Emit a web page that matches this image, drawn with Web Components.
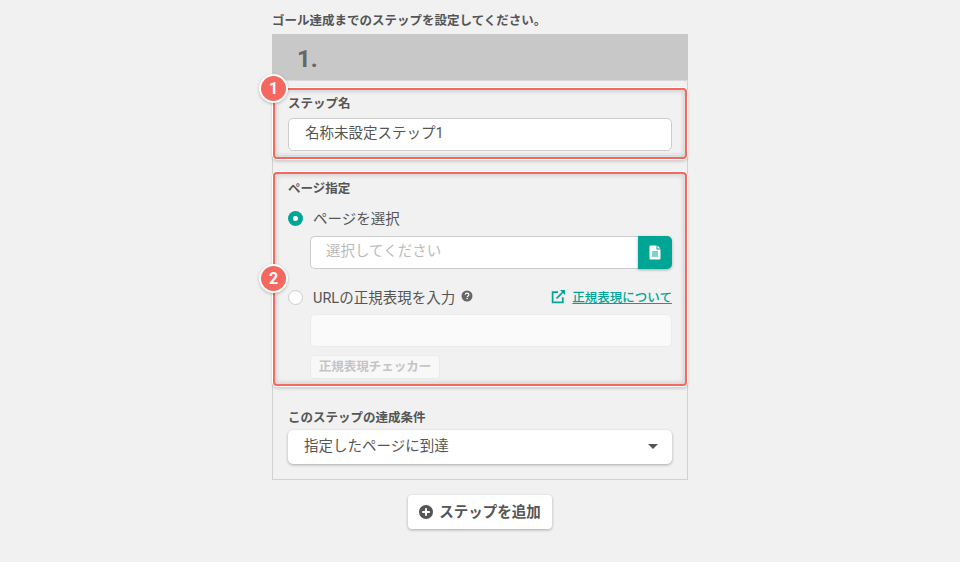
<!DOCTYPE html>
<html lang="ja">
<head>
<meta charset="utf-8">
<title>ステップ設定</title>
<style>
  html, body { margin: 0; height: 100%; }
  body {
    background: #f1f1f1;
    color: #555;
    font-family: Roboto, "Noto Sans CJK JP", sans-serif;
    overflow: hidden;
  }
</style>
</head>
<body>
<goal-page>
  <step-card number="1.">
    <marked-section badge="1" style="--gap-top:6px;--pad:9px 16px 0;--h:73px">
      <field-label style="--after:7px">ステップ名</field-label>
      <text-box value="名称未設定ステップ1"></text-box>
    </marked-section>
    <marked-section badge="2" style="--gap-top:11px;--pad:10px 16px 0;--h:216px;--badge-top:93px">
      <field-label style="--after:11px">ページ指定</field-label>
      <radio-row checked style="--row-after:9px">ページを選択</radio-row>
      <page-picker></page-picker>
      <radio-row help link="正規表現について" style="--row-top:17px">URLの正規表現を入力</radio-row>
      <text-box disabled indent></text-box>
      <checker-button>正規表現チェッカー</checker-button>
    </marked-section>
    <select-field label="このステップの達成条件" value="指定したページに到達"></select-field>
  </step-card>
  <add-button>ステップを追加</add-button>
</goal-page>

<script>
class GoalPage extends HTMLElement {
  constructor() {
    super();
    this.attachShadow({ mode: "open" });
    this.shadowRoot.innerHTML = `
      <style>
        :host { display: block; width: 416px; margin: 0 auto; padding-top: 13px; }
        p { margin: 0 0 6px; height: 15px; font-size: 12.5px; line-height: 15px; font-weight: 700; color: #555; }
      </style>
      <p>ゴール達成までのステップを設定してください。</p>
      <slot></slot>
    `;
  }
}

class StepCard extends HTMLElement {
  constructor() {
    super();
    this.attachShadow({ mode: "open" });
    this.shadowRoot.innerHTML = `
      <style>
        :host { display: block; box-sizing: border-box; height: 446px; border: 1px solid #d2d2d2; border-top: 0; }
        header {
          height: 47px; margin: 0 -1px; padding-left: 25px; box-sizing: border-box;
          background: #c8c8c8; border-bottom: 1px solid #d9d9d9;
          font-size: 24px; line-height: 50px; font-weight: 700; color: #666;
        }
      </style>
      <header></header>
      <slot></slot>
    `;
    this.shadowRoot.querySelector("header").textContent = this.getAttribute("number");
  }
}

class MarkedSection extends HTMLElement {
  constructor() {
    super();
    this.attachShadow({ mode: "open" });
    this.shadowRoot.innerHTML = `
      <style>
        :host {
          display: block; position: relative; box-sizing: border-box;
          margin: var(--gap-top) -1px 0; height: var(--h); padding: var(--pad);
        }
        .frame {
          position: absolute; inset: 1px; border-radius: 4px; pointer-events: none;
          border: 2px solid #f4685f;
          box-shadow: 0 0 0 1px #fff, 0 2px 3px 1px rgba(0,0,0,.14), inset 0 0 4px 2px rgba(0,0,0,.12);
        }
        .badge {
          position: absolute; left: -13px; top: var(--badge-top, -13px);
          width: 25px; height: 25px; border-radius: 50%;
          background: #f4685f; border: 2px solid #fff; box-shadow: 0 1px 3px rgba(0,0,0,.25);
          color: #fff; font-size: 16px; font-weight: 700; line-height: 25px; text-align: center;
        }
      </style>
      <slot></slot>
      <div class="frame"></div>
      <div class="badge"></div>
    `;
    this.shadowRoot.querySelector(".badge").textContent = this.getAttribute("badge");
  }
}

class FieldLabel extends HTMLElement {
  constructor() {
    super();
    this.attachShadow({ mode: "open" });
    this.shadowRoot.innerHTML = `
      <style>
        :host { display: block; height: 15px; margin-bottom: var(--after, 6px); font-size: 12.5px; line-height: 15px; font-weight: 700; color: #555; }
      </style>
      <slot></slot>
    `;
  }
}

class TextBox extends HTMLElement {
  constructor() {
    super();
    this.attachShadow({ mode: "open" });
    this.shadowRoot.innerHTML = `
      <style>
        :host {
          display: block; box-sizing: border-box; height: 33px; padding-left: 16px;
          background: #fff; border: 1px solid #ccc; border-radius: 5px;
          font-size: 14.5px; line-height: 29px; color: #555;
        }
        :host([disabled]) { background: #fafafa; border-color: #ececec; }
        :host([indent]) { margin-left: 22px; }
      </style>
      <span></span>
    `;
    this.shadowRoot.querySelector("span").textContent = this.getAttribute("value") || "";
  }
}

class RadioRow extends HTMLElement {
  constructor() {
    super();
    this.attachShadow({ mode: "open" });
    const help = this.hasAttribute("help") ? `
      <svg class="help" width="12" height="12" viewBox="0 0 12 12">
        <circle cx="6" cy="6" r="5.5" fill="#666"/>
        <path d="M4.2 4.7C4.3 3.7 5 3.1 6 3.1c1.1 0 1.9.6 1.9 1.5 0 1.3-1.6 1.3-1.6 2.4" fill="none" stroke="#fff" stroke-width="1.2"/>
        <rect x="5.5" y="7.8" width="1.4" height="1.3" fill="#fff"/>
      </svg>` : "";
    const link = this.getAttribute("link");
    const linkPart = link ? `
      <a>
        <svg width="15" height="15" viewBox="0 0 15 15" fill="none" stroke="#00a595" stroke-width="1.7">
          <path d="M7 3.2H1.6v10.2h10.2V8.2"/>
          <path d="M5.6 9.4L13 2"/>
          <path d="M9 1h5v5Z" stroke="none" fill="#00a595"/>
        </svg>
        <span>${link}</span>
      </a>` : "";
    this.shadowRoot.innerHTML = `
      <style>
        :host {
          display: flex; align-items: center; height: 20px; margin-top: var(--row-top, 0);
          margin-bottom: var(--row-after, 8px); font-size: 14.5px; color: #555;
        }
        .dot {
          box-sizing: border-box; width: 15px; height: 15px; border-radius: 50%;
          margin: 2px 10px 0 0; background: #fff; border: 1px solid #ccc;
        }
        :host([checked]) .dot {
          border: 0;
          background: radial-gradient(circle at center, #fff 2px, #00a595 3px);
        }
        .help { margin-left: 6px; }
        a {
          margin-left: auto; display: flex; align-items: center; gap: 6px;
          font-size: 12.5px; font-weight: 500; color: #00a595;
        }
        a span { text-decoration: underline; }
      </style>
      <span class="dot"></span><slot></slot>${help}${linkPart}
    `;
  }
}

class PagePicker extends HTMLElement {
  constructor() {
    super();
    this.attachShadow({ mode: "open" });
    this.shadowRoot.innerHTML = `
      <style>
        :host { display: flex; height: 33px; margin-left: 22px; }
        .box {
          flex: 1; box-sizing: border-box; padding-left: 15px;
          background: #fff; border: 1px solid #ccc; border-right: 0; border-radius: 5px 0 0 5px;
          font-size: 14.5px; line-height: 29px; color: #bbb;
        }
        button {
          width: 34px; padding: 0; border: 0; border-radius: 0 5px 5px 0; background: #00a595;
          box-shadow: 0 1px 3px rgba(0,0,0,.3); display: flex; align-items: center; justify-content: center;
        }
      </style>
      <div class="box">選択してください</div>
      <button>
        <svg width="12" height="15" viewBox="0 0 12 15">
          <path d="M0.5 1.5a1 1 0 0 1 1-1H7.5V4.5H11.5V13.5a1 1 0 0 1-1 1H1.5a1 1 0 0 1-1-1Z" fill="#fff"/>
          <path d="M8.5 .6L11.4 3.5H8.5Z" fill="#fff"/>
          <path d="M3 7h6M3 9h6M3 11h6" stroke="#00a595" stroke-width="1"/>
        </svg>
      </button>
    `;
  }
}

class CheckerButton extends HTMLElement {
  constructor() {
    super();
    this.attachShadow({ mode: "open" });
    this.shadowRoot.innerHTML = `
      <style>
        :host {
          display: block; box-sizing: border-box; width: 130px; height: 24px; margin: 8px 0 0 22px;
          background: #f8f8f8; border: 1px solid #ebebeb; border-radius: 4px;
          font-size: 12.5px; font-weight: 700; line-height: 22px; text-align: center; color: #c4c4c4;
        }
      </style>
      <slot></slot>
    `;
  }
}

class SelectField extends HTMLElement {
  constructor() {
    super();
    this.attachShadow({ mode: "open" });
    this.shadowRoot.innerHTML = `
      <style>
        :host { display: block; margin: 23px 15px 0 15px; }
        label { display: block; height: 15px; margin-bottom: 5px; font-size: 12.5px; line-height: 15px; font-weight: 700; color: #555; }
        .select {
          display: flex; align-items: center; justify-content: space-between; box-sizing: border-box;
          height: 34px; padding: 0 14px 0 16px; background: #fff; border-radius: 5px;
          box-shadow: 0 1px 3px rgba(0,0,0,.3); font-size: 14.5px; color: #555;
        }
        span { margin-bottom: 6px; }
        i { width: 0; height: 0; margin-bottom: 2px; border: 5px solid transparent; border-top: 5px solid #555; border-bottom: 0; }
      </style>
      <label></label>
      <div class="select"><span></span><i></i></div>
    `;
    this.shadowRoot.querySelector("label").textContent = this.getAttribute("label");
    this.shadowRoot.querySelector("span").textContent = this.getAttribute("value");
  }
}

class AddButton extends HTMLElement {
  constructor() {
    super();
    this.attachShadow({ mode: "open" });
    this.shadowRoot.innerHTML = `
      <style>
        :host {
          display: flex; align-items: center; justify-content: center; gap: 6px; box-sizing: border-box;
          width: 144px; height: 34px; margin: 15px auto 0; padding-bottom: 4px; background: #fff; border-radius: 4px;
          box-shadow: 0 1px 3px rgba(0,0,0,.3); font-size: 14.5px; font-weight: 700; color: #555;
        }
        svg { margin-top: 4px; }
      </style>
      <svg width="14" height="14" viewBox="0 0 14 14">
        <circle cx="7" cy="7" r="7" fill="#555"/>
        <path d="M7 3.2v7.6M3.2 7h7.6" stroke="#fff" stroke-width="2"/>
      </svg>
      <slot></slot>
    `;
  }
}

customElements.define("goal-page", GoalPage);
customElements.define("step-card", StepCard);
customElements.define("marked-section", MarkedSection);
customElements.define("field-label", FieldLabel);
customElements.define("text-box", TextBox);
customElements.define("radio-row", RadioRow);
customElements.define("page-picker", PagePicker);
customElements.define("checker-button", CheckerButton);
customElements.define("select-field", SelectField);
customElements.define("add-button", AddButton);
</script>
</body>
</html>
